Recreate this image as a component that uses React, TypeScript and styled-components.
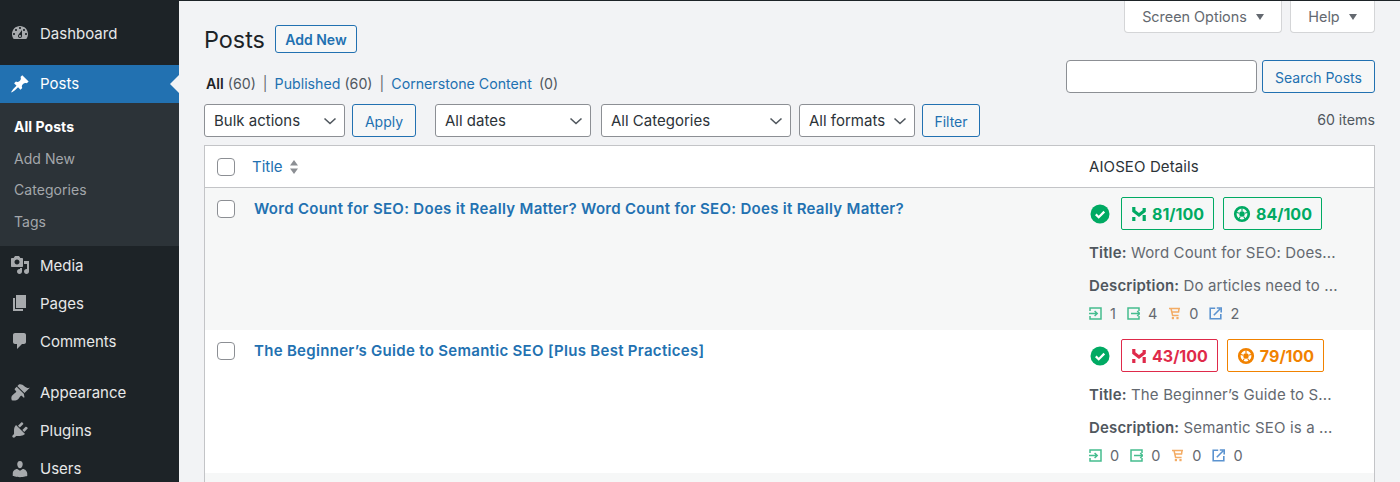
import React from 'react';
import styled, { createGlobalStyle } from 'styled-components';

const GlobalStyle = createGlobalStyle`
  html, body {
    margin: 0;
    height: 482px;
    overflow: hidden;
    background: #f2f3f5;
    font-family: Inter, "Noto Sans", sans-serif;
    font-size: 14px;
    color: #3c434a;
  }
  * { box-sizing: border-box; }
`;

const menuIcons: Record<string, string> = {
  dashboard:
    'M3.76 16h12.48c1.1-1.37 1.76-3.11 1.76-5 0-4.42-3.58-8-8-8s-8 3.58-8 8c0 1.89.66 3.63 1.76 5zM10 4c.55 0 1 .45 1 1s-.45 1-1 1-1-.45-1-1 .45-1 1-1zM6 6c.55 0 1 .45 1 1s-.45 1-1 1-1-.45-1-1 .45-1 1-1zm8 0c.55 0 1 .45 1 1s-.45 1-1 1-1-.45-1-1 .45-1 1-1zm-5.37 5.55L12 7v6c0 1.1-.9 2-2 2s-2-.9-2-2c0-.57.24-1.08.63-1.45zM4 10c.55 0 1 .45 1 1s-.45 1-1 1-1-.45-1-1 .45-1 1-1zm12 0c.55 0 1 .45 1 1s-.45 1-1 1-1-.45-1-1 .45-1 1-1zm-5 3c0-.55-.45-1-1-1s-1 .45-1 1 .45 1 1 1 1-.45 1-1z',
  posts:
    'M10.44 3.02l1.82-1.82 6.36 6.35-1.83 1.82c-1.05-.68-2.48-.57-3.41.36l-.75.75c-.92.93-1.04 2.35-.35 3.41l-1.83 1.82-2.41-2.41-2.8 2.79c-.42.42-3.38 2.71-3.8 2.29s1.86-3.39 2.28-3.81l2.79-2.79L4.1 9.36l1.83-1.82c1.05.69 2.48.57 3.4-.36l.75-.75c.93-.92 1.05-2.35.36-3.41z',
  media:
    'M13 11V4c0-.55-.45-1-1-1h-1.67L9 1H5L3.67 3H2c-.55 0-1 .45-1 1v7c0 .55.45 1 1 1h10c.55 0 1-.45 1-1zM7 4.5c1.38 0 2.5 1.12 2.5 2.5S8.38 9.5 7 9.5 4.5 8.38 4.5 7 5.62 4.5 7 4.5zM14 6h5v10.5c0 1.38-1.12 2.5-2.5 2.5S14 17.88 14 16.5s1.12-2.5 2.5-2.5c.17 0 .34.02.5.05V9h-3V6zm-4 8.05V13h2v3.5c0 1.38-1.12 2.5-2.5 2.5S7 17.88 7 16.5 8.12 14 9.5 14c.17 0 .34.02.5.05z',
  pages: 'M6 15V2h10v13H6zm-1 1h8v2H3V5h2v11z',
  comments:
    'M5 2h9c1.1 0 2 .9 2 2v7c0 1.1-.9 2-2 2h-2l-5 5v-5H5c-1.1 0-2-.9-2-2V4c0-1.1.9-2 2-2z',
  appearance:
    'M14.48 11.06L7.41 3.99l1.5-1.5c.5-.56 2.3-.47 3.51.32 1.21.8 1.43 1.28 2.91 2.1 1.18.64 2.45 1.26 4.45.85zm-.71.71L6.7 4.7 4.93 6.47c-.39.39-.39 1.02 0 1.41l1.06 1.06c.39.39.39 1.03 0 1.42-.6.6-1.43 1.11-2.21 1.69-.35.26-.7.53-1.01.84C1.43 13.23.91 15.95 1.75 18.2c2.25.84 4.97.32 6.33-.89.3-.31.58-.66.84-1.01.58-.78 1.09-1.61 1.69-2.21.39-.39 1.03-.39 1.42 0l1.06 1.06c.39.39 1.02.39 1.41 0z',
  plugins:
    'M13.11 4.36L9.87 7.6 8 5.73l3.24-3.24c.35-.34 1.05-.2 1.56.32.52.51.66 1.21.31 1.55zm-8 1.77l.91-1.12 9.01 9.01-1.19.84c-.71.71-2.63 1.16-3.82 1.16H6.14L4.9 17.26c-.59.59-1.54.59-2.12 0-.59-.58-.59-1.53 0-2.12l1.24-1.24v-3.88c0-1.13.4-3.19 1.09-3.89zm7.26 3.97l3.24-3.24c.34-.35 1.04-.21 1.55.31.52.51.66 1.21.31 1.55l-3.24 3.25z',
  users:
    'M10 9.25c-2.27 0-2.73-3.44-2.73-3.44C7 4.02 7.82 2 9.97 2c2.16 0 2.98 2.02 2.71 3.81 0 0-.41 3.44-2.68 3.44zm0 2.57L12.72 10c2.39 0 4.52 2.33 4.52 4.53v2.49s-3.65 1.13-7.24 1.13c-3.65 0-7.24-1.13-7.24-1.13v-2.49c0-2.25 1.94-4.48 4.47-4.48z',
};

const MenuIcon = ({ name }: { name: string }) => (
  <MenuGlyph viewBox="0 0 20 20" aria-hidden="true">
    <path fillRule="evenodd" d={menuIcons[name]} fill="currentColor" />
  </MenuGlyph>
);

// an M on top with two short legs under it
const TruSeoIcon = () => (
  <ScoreGlyph viewBox="0 0 16 16" $size={16} aria-hidden="true">
    <path
      d="M2.8 1v4l5.2 4 5.2-4V2M2.8 11v4M13.2 9v6"
      fill="none"
      stroke="currentColor"
      strokeWidth="3.2"
    />
  </ScoreGlyph>
);

const HeadlineIcon = () => (
  <ScoreGlyph viewBox="0 0 16 16" $size={18} aria-hidden="true">
    <circle cx="8" cy="8" r="6" fill="none" stroke="currentColor" strokeWidth="2.4" />
    <circle cx="8" cy="8" r="2.4" fill="currentColor" />
    <path d="M8 2.5v3M2.8 6.4l2.8 1M13.2 6.4l-2.8 1M4.8 12.8l1.8-2.6M11.2 12.8l-1.8-2.6" stroke="currentColor" strokeWidth="1" />
  </ScoreGlyph>
);

const CheckIcon = () => (
  <StatusGlyph viewBox="0 0 20 20" aria-hidden="true">
    <circle cx="10" cy="10" r="9.5" fill="#00aa63" />
    <path d="M5.8 10.4 8.7 13.2 14.3 7.6" fill="none" stroke="#fff" strokeWidth="2.2" />
  </StatusGlyph>
);

const LinkIcon = ({ kind }: { kind: 'in' | 'out' | 'cart' | 'ext' }) => {
  if (kind === 'cart') {
    return (
      <CountGlyph viewBox="0 0 13 13" aria-hidden="true" $color="#f3ac65">
        <path d="M1 1.5h11M3 1.5 4.6 8.5h6M3.6 5h7.6M11 1.5l-.4 3.5" fill="none" stroke="currentColor" strokeWidth="1.5" />
        <rect x="3.8" y="10" width="2.2" height="2.2" fill="currentColor" />
        <rect x="8.4" y="10" width="2.2" height="2.2" fill="currentColor" />
      </CountGlyph>
    );
  }
  if (kind === 'ext') {
    return (
      <CountGlyph viewBox="0 0 13 13" aria-hidden="true" $color="#5b93d0">
        <path d="M11.8 7v4.8H1.2V1.2h5" fill="none" stroke="currentColor" strokeWidth="1.6" />
        <path d="M4.8 8.2 11 2M7.8 1h4.4v4.4" fill="none" stroke="currentColor" strokeWidth="1.6" />
      </CountGlyph>
    );
  }
  return (
    <CountGlyph viewBox="0 0 13 13" aria-hidden="true" $color="#45bd8f">
      <path
        d={
          kind === 'in'
            ? 'M1 4V1h11v11H1V9M0 6.5h8M5.6 4 8.2 6.5 5.6 9'
            : 'M12 4V1H1v11h11V9M4 6.5h9M10.2 4l2.6 2.5L10.2 9'
        }
        fill="none"
        stroke="currentColor"
        strokeWidth="1.5"
      />
    </CountGlyph>
  );
};

const Caret = () => (
  <CaretGlyph viewBox="0 0 14 8" aria-hidden="true">
    <path d="M1.5 1.5 7 6.5 12.5 1.5" fill="none" stroke="currentColor" strokeWidth="1.6" />
  </CaretGlyph>
);

const posts = [
  {
    title: 'Word Count for SEO: Does it Really Matter? Word Count for SEO: Does it Really Matter?',
    seoTitle: 'Word Count for SEO: Does...',
    description: 'Do articles need to ...',
    truSeo: 81,
    headline: 84,
    counts: [1, 4, 0, 2],
    striped: true,
    height: 142,
  },
  {
    title: 'The Beginner’s Guide to Semantic SEO [Plus Best Practices]',
    seoTitle: 'The Beginner’s Guide to S...',
    description: 'Semantic SEO is a ...',
    truSeo: 43,
    headline: 79,
    counts: [0, 0, 0, 0],
    striped: false,
    height: 143,
  },
];

const scoreColor = (score: number) => (score >= 80 ? '#00aa63' : score >= 50 ? '#f18200' : '#df2a4a');

const countKinds = ['in', 'out', 'cart', 'ext'] as const;

export default function App() {
  return (
    <>
      <GlobalStyle />
      <Page>
        <Sidebar>
          <MenuItem><MenuIcon name="dashboard" />Dashboard</MenuItem>
          <ActiveItem><MenuIcon name="posts" />Posts</ActiveItem>
          <SubMenu>
            <SubItem $current>All Posts</SubItem>
            <SubItem>Add New</SubItem>
            <SubItem>Categories</SubItem>
            <SubItem>Tags</SubItem>
          </SubMenu>
          <MenuItem><MenuIcon name="media" />Media</MenuItem>
          <MenuItem><MenuIcon name="pages" />Pages</MenuItem>
          <MenuItem><MenuIcon name="comments" />Comments</MenuItem>
          <Separator />
          <MenuItem><MenuIcon name="appearance" />Appearance</MenuItem>
          <MenuItem><MenuIcon name="plugins" />Plugins</MenuItem>
          <MenuItem><MenuIcon name="users" />Users</MenuItem>
        </Sidebar>
        <Content>
          <TopArea>
            <div>
              <HeadingRow>
                <Heading>Posts</Heading>
                <OutlineButton $height={28} $width={82} $bold>Add New</OutlineButton>
              </HeadingRow>
              <Views>
                <strong>All</strong>&nbsp;<Muted>(60)</Muted>
                <Sep>|</Sep>
                <a>Published</a>&nbsp;<Muted>(60)</Muted>
                <Sep>|</Sep>
                <a>Cornerstone Content</a>
                <ZeroCount>(0)</ZeroCount>
              </Views>
            </div>
            <TopRight>
              <Tabs>
                <Tab $width={158}>Screen Options <TabArrow /></Tab>
                <Tab $width={85}>Help <TabArrow /></Tab>
              </Tabs>
              <SearchRow>
                <SearchInput />
                <OutlineButton $height={33} $width={113}>Search Posts</OutlineButton>
              </SearchRow>
            </TopRight>
          </TopArea>
          <Filters>
            <Select $width={141}>Bulk actions<Caret /></Select>
            <OutlineButton $height={33} $width={64} $spaced={7}>Apply</OutlineButton>
            <Select $width={156} $spaced={19}>All dates<Caret /></Select>
            <Select $width={190} $spaced={10}>All Categories<Caret /></Select>
            <Select $width={116} $spaced={8}>All formats<Caret /></Select>
            <OutlineButton $height={33} $width={58} $spaced={7}>Filter</OutlineButton>
            <ItemCount>60 items</ItemCount>
          </Filters>
          <Table>
            <HeaderRow>
              <CheckBox />
              <TitleHead>
                Title
                <SortArrows viewBox="0 0 10 16" aria-hidden="true">
                  <path d="M5 1 9 6.5H1zM5 15 1 9.5h8z" fill="#8c8f94" />
                </SortArrows>
              </TitleHead>
              <DetailsHead>AIOSEO Details</DetailsHead>
            </HeaderRow>
            {posts.map((post) => (
              <PostRow key={post.title} $striped={post.striped} $height={post.height}>
                <CheckBox />
                <PostTitle>{post.title}</PostTitle>
                <Details>
                  <Scores>
                    <CheckIcon />
                    <ScoreBadge $color={scoreColor(post.truSeo)}>
                      <TruSeoIcon />{post.truSeo}/100
                    </ScoreBadge>
                    <ScoreBadge $color={scoreColor(post.headline)}>
                      <HeadlineIcon />{post.headline}/100
                    </ScoreBadge>
                  </Scores>
                  <MetaLine><strong>Title:</strong> {post.seoTitle}</MetaLine>
                  <MetaLine><strong>Description:</strong> {post.description}</MetaLine>
                  <Counts>
                    {post.counts.map((count, i) => (
                      <Count key={countKinds[i]}>
                        <LinkIcon kind={countKinds[i]} />{count}
                      </Count>
                    ))}
                  </Counts>
                </Details>
              </PostRow>
            ))}
            <PostRow $striped />
          </Table>
        </Content>
      </Page>
    </>
  );
}

const Page = styled.div`
  display: flex;
  height: 482px;
  overflow: hidden;
  border-top: 1px solid #1d2327;
`;

const Sidebar = styled.nav`
  flex: 0 0 179px;
  height: 481px;
  padding-top: 13px;
  background: #1d2327;
  color: #f0f0f1;
  overflow: hidden;
`;

const MenuGlyph = styled.svg`
  width: 20px;
  height: 20px;
  margin: 0 10px;
  color: #a7aaad;
  flex: none;
`;

const MenuItem = styled.div`
  display: flex;
  align-items: center;
  height: 38.2px;
  font-size: 15px;
  color: #e7e8e9;

  &:first-child {
    margin-bottom: 12.8px;
  }
`;

const ActiveItem = styled(MenuItem)`
  position: relative;
  height: 38px;
  background: #2271b1;
  color: #fff;

  ${MenuGlyph} {
    color: #fff;
  }

  &::after {
    content: '';
    position: absolute;
    right: 0;
    top: 50%;
    margin-top: -9px;
    border: 9px solid transparent;
    border-right-color: #f2f3f5;
    border-left-width: 0;
  }
`;

const SubMenu = styled.div`
  height: 143px;
  padding-top: 8px;
  background: #2c3338;
`;

const SubItem = styled.div<{ $current?: boolean }>`
  display: flex;
  align-items: center;
  height: 31.6px;
  padding-left: 14px;
  font-size: 14px;
  letter-spacing: 0.05px;
  font-weight: ${({ $current }) => ($current ? 700 : 400)};
  color: ${({ $current }) => ($current ? '#fff' : '#a3a7ab')};
`;

const Separator = styled.div`
  height: 12.6px;
`;

const Content = styled.main`
  flex: 1;
  min-width: 0;
  padding: 0 25px 0 25px;
`;

const TopArea = styled.div`
  display: flex;
  justify-content: space-between;
`;

const HeadingRow = styled.div`
  display: flex;
  align-items: center;
  gap: 10px;
  margin-top: 24px;
  height: 28px;
`;

const Heading = styled.h1`
  margin: 0;
  font-size: 23.4px;
  font-weight: 400;
  color: #1d2327;
`;

const OutlineButton = styled.button<{ $height: number; $width?: number; $bold?: boolean; $spaced?: number }>`
  flex: none;
  height: ${({ $height }) => $height}px;
  width: ${({ $width }) => ($width ? `${$width}px` : 'auto')};
  margin-left: ${({ $spaced }) => $spaced ?? 0}px;
  padding: ${({ $bold }) => ($bold ? 0 : '1px 0 0')};
  border: 1px solid #2271b1;
  border-radius: 3px;
  background: #f6f7f7;
  color: #2271b1;
  font-family: inherit;
  font-size: 14px;
  font-weight: ${({ $bold }) => ($bold ? 600 : 400)};
`;

const Views = styled.div`
  margin-top: 20px;
  padding-left: 2px;
  display: flex;
  align-items: center;
  height: 20px;
  font-size: 14.2px;
  color: #1d2327;

  a {
    color: #2271b1;
  }

  strong {
    font-weight: 600;
  }
`;

const Muted = styled.span`
  color: #50575e;
`;

const ZeroCount = styled(Muted)`
  margin-left: 7px;
`;

const Sep = styled.span`
  margin: 0 7px;
  color: #646970;
`;

const TopRight = styled.div`
  display: flex;
  flex-direction: column;
  align-items: flex-end;
`;

const Tabs = styled.div`
  display: flex;
  gap: 8px;
`;

const Tab = styled.div<{ $width: number }>`
  display: flex;
  align-items: center;
  justify-content: center;
  gap: 9px;
  width: ${({ $width }) => $width}px;
  height: 32px;
  border: 1px solid #d4d5d7;
  border-top: none;
  border-radius: 0 0 4px 4px;
  background: #fff;
  color: #646970;
  font-size: 14.4px;
`;

const TabArrow = styled.span`
  width: 0;
  height: 0;
  border-left: 4.5px solid transparent;
  border-right: 4.5px solid transparent;
  border-top: 6px solid #646970;
`;

const SearchRow = styled.div`
  display: flex;
  gap: 5px;
  margin-top: 27px;
`;

const SearchInput = styled.div`
  width: 191px;
  height: 33px;
  border: 1px solid #8c8f94;
  border-radius: 4px;
  background: #fff;
`;

const Filters = styled.div`
  display: flex;
  align-items: center;
  margin-top: 11px;
  height: 33px;
`;

const Select = styled.div<{ $width: number; $spaced?: number }>`
  display: flex;
  align-items: center;
  justify-content: space-between;
  width: ${({ $width }) => $width}px;
  height: 33px;
  margin-left: ${({ $spaced }) => $spaced ?? 0}px;
  padding: 0 7px 0 9px;
  border: 1px solid #8c8f94;
  border-radius: 3px;
  background: #fff;
  color: #2c3338;
  font-size: 15px;
`;

const CaretGlyph = styled.svg`
  width: 14px;
  height: 8px;
  color: #50575e;
  flex: none;
`;

const ItemCount = styled.div`
  margin-left: auto;
  font-size: 14.2px;
  color: #50575e;
  transform: translateY(-1px);
`;

const Table = styled.div`
  margin-top: 8px;
  border: 1px solid #c3c4c7;
  border-bottom: none;
  background: #fff;
`;

const HeaderRow = styled.div`
  display: grid;
  grid-template-columns: 35px 1fr 285px;
  align-items: center;
  height: 42px;
  border-bottom: 1px solid #c3c4c7;
  padding-left: 12px;
`;

const CheckBox = styled.span`
  display: block;
  width: 18px;
  height: 18px;
  border: 1px solid #8c8f94;
  border-radius: 4px;
  background: #fff;
`;

const TitleHead = styled.div`
  display: flex;
  align-items: center;
  gap: 6px;
  color: #2271b1;
  font-size: 15px;
`;

const SortArrows = styled.svg`
  width: 10px;
  height: 16px;
`;

const DetailsHead = styled.div`
  font-size: 15px;
  letter-spacing: 0.1px;
  color: #2c3338;
`;

const PostRow = styled.div<{ $striped?: boolean; $height?: number }>`
  display: grid;
  grid-template-columns: 37px 1fr 285px;
  align-items: start;
  height: ${({ $height }) => $height ?? 143}px;
  padding-left: 12px;
  background: ${({ $striped }) => ($striped ? '#f6f7f7' : '#fff')};

  ${CheckBox} {
    margin-top: 12px;
  }
`;

const PostTitle = styled.div`
  margin-top: 11px;
  color: #2271b1;
  font-size: 15px;
  letter-spacing: 0.3px;
  font-weight: 600;
`;

const Details = styled.div`
  padding-top: 9px;
`;

const Scores = styled.div`
  display: flex;
  align-items: center;
  gap: 9px;
  height: 33px;
`;

const StatusGlyph = styled.svg`
  width: 20px;
  height: 20px;
  margin: 0 2px 0 1px;
  flex: none;
`;

const ScoreGlyph = styled.svg<{ $size: number }>`
  width: ${({ $size }) => $size}px;
  height: ${({ $size }) => $size}px;
  flex: none;
`;

const ScoreBadge = styled.div<{ $color: string }>`
  display: flex;
  align-items: center;
  gap: 5px;
  height: 33px;
  padding: 0 9px;
  border: 1px solid ${({ $color }) => $color};
  border-radius: 2px;
  color: ${({ $color }) => $color};
  font-size: 16px;
  font-weight: 700;
`;

const MetaLine = styled.div`
  margin-top: 13px;
  height: 20px;
  line-height: 20px;
  font-size: 15px;
  letter-spacing: 0.15px;
  color: #646970;

  strong {
    font-weight: 600;
    color: #50575e;
  }
`;

const Counts = styled.div`
  display: flex;
  gap: 11px;
  margin-top: 9px;
  font-size: 14.5px;
  color: #646970;
`;

const Count = styled.span`
  display: flex;
  align-items: center;
  gap: 8px;
`;

const CountGlyph = styled.svg<{ $color: string }>`
  width: 13px;
  height: 13px;
  color: ${({ $color }) => $color};
  flex: none;
`;
